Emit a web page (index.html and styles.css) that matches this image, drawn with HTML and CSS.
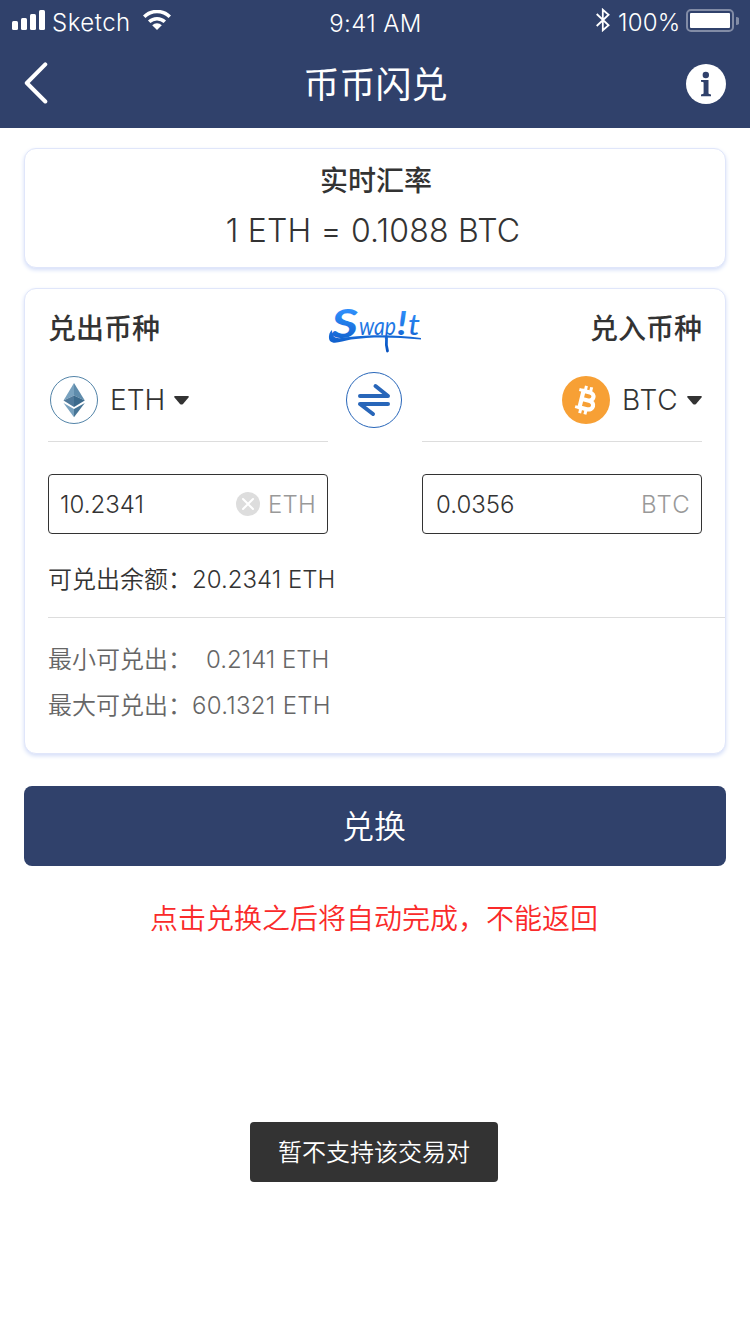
FILE: index.html
```html
<!DOCTYPE html>
<html lang="zh-CN">
<head>
<meta charset="utf-8">
<title>币币闪兑</title>
<link rel="stylesheet" href="styles.css">
</head>
<body>
<div class="screen">
  <header class="header">
    <div class="status">
      <div class="status-left">
        <svg class="signal" width="33" height="20" viewBox="0 0 33 20" fill="#fff"><rect x="0" y="11" width="6" height="9" rx="1.5"/><rect x="9" y="8" width="6" height="12" rx="1.5"/><rect x="18" y="4" width="6" height="16" rx="1.5"/><rect x="27" y="0" width="6" height="20" rx="1.5"/></svg>
        <span class="carrier">Sketch</span>
        <svg class="wifi" width="28" height="20" viewBox="0 0 28 20" fill="none" stroke="#fff" stroke-width="3.5"><path d="M1.2 6.7A18.3 18.3 0 0 1 26.8 6.7"/><path d="M6.2 11.8A11.2 11.2 0 0 1 21.8 11.8"/><path fill="#fff" stroke="none" d="M9.2 15.2A6.9 6.9 0 0 1 18.8 15.2L14 20Z"/></svg>
      </div>
      <span class="clock">9:41 AM</span>
      <div class="status-right">
        <svg class="bluetooth" width="14" height="24" viewBox="0 0 14 24" fill="none" stroke="#fff" stroke-width="1.8"><path d="M.7 6 12.6 17.3 6.8 22.3V1.7L12.6 6.7.7 18"/></svg>
        <span class="percent">100%</span>
        <svg class="battery" width="53" height="23" viewBox="0 0 53 23"><rect x="1" y="1" width="46" height="21" rx="4" fill="none" stroke="#828ca6" stroke-width="2"/><rect x="4" y="4" width="40" height="15" rx="1" fill="#fff"/><path d="M50 8A4 4 0 0 1 50 16Z" fill="#828ca6"/></svg>
      </div>
    </div>
    <nav class="nav">
      <svg class="back" width="24" height="42" viewBox="0 0 24 42" fill="none" stroke="#fff" stroke-width="4" stroke-linecap="round" stroke-linejoin="round"><path d="M21.3 2.3 2.8 21 21.3 39.5"/></svg>
      <h1 class="title">币币闪兑</h1>
      <svg width="40" height="40" viewBox="0 0 40 40"><circle cx="20" cy="20" r="20" fill="#fff"/><circle cx="19.8" cy="11" r="3.2" fill="#30416b"/><path fill="#30416b" d="M15 16H22.5V29.5Q22.8 30.2 25 30.6V32.2H15V30.6Q17.3 30.2 17.6 29.5V18.6Q17.4 17.8 15 17.7Z"/></svg>
    </nav>
  </header>

  <main class="main">
    <section class="card rate">
      <h2 class="label">实时汇率</h2>
      <p class="rate-value">1 ETH = 0.1088 BTC</p>
    </section>

    <section class="card swap">
      <div class="labels">
        <h2 class="label">兑出币种</h2>
        <svg class="logo" width="94" height="50" viewBox="0 0 94 50">
          <defs><linearGradient id="ink" gradientUnits="userSpaceOnUse" x1="0" y1="0" x2="0" y2="46"><stop offset="0" stop-color="#3193ff"/><stop offset="1" stop-color="#0650bd"/></linearGradient></defs>
          <g class="logo-text" fill="url(#ink)"><text x="3" y="31" font-size="40" font-weight="700" textLength="27" lengthAdjust="spacingAndGlyphs">S</text><text x="31" y="28" font-size="25" textLength="37" lengthAdjust="spacingAndGlyphs">wap</text><text x="69" y="28" font-size="32" font-weight="700" textLength="10" lengthAdjust="spacingAndGlyphs">!</text><text x="80" y="28" font-size="28" textLength="12" lengthAdjust="spacingAndGlyphs">t</text></g>
          <path fill="url(#ink)" d="M4 23C1 25 0 31 2 34C6 38 14 34 23 32.500C44 29.500 66 30 93 32.500V31C68 27.500 44 27.500 21 30C12 31 4 34 4 23Z"/>
          <path fill="none" stroke="url(#ink)" stroke-width="2.800" stroke-linecap="round" d="M58.500 31Q57.800 38 59.500 44"/>
        </svg>
        <h2 class="label label-right">兑入币种</h2>
      </div>

      <div class="coins">
        <div class="coin">
          <svg width="48" height="48" viewBox="0 0 48 48"><circle cx="24" cy="24" r="23.5" fill="#fff" stroke="#5384a8"/><path fill="#79a2bf" d="M24 7V19.5L13.5 24.5Z"/><path fill="#5f8cac" d="M24 7V19.5L34.8 24.5Z"/><path fill="#50799a" d="M24 19.5V31L13.5 24.5Z"/><path fill="#3c6a8c" d="M24 19.5V31L34.8 24.5Z"/><path fill="#79a2bf" d="M13.5 27 24 33V41.3Z"/><path fill="#477596" d="M34.8 27 24 33V41.3Z"/></svg>
          <span class="symbol">ETH</span>
          <svg class="caret" width="15" height="9" viewBox="0 0 15 9"><path fill="#333" d="M1 0H14Q15.4.5 14.5 1.6L9 7.9Q7.500 9 6 7.900L.5 1.600Q-.4.500 1 0Z"/></svg>
        </div>
        <svg class="exchange" width="56" height="56" viewBox="0 0 56 56" fill="none" stroke="#2866b9"><circle cx="28" cy="28" r="27.500"/><path stroke-width="4" stroke-linecap="round" stroke-linejoin="round" d="M14 24H42L29.500 14M42 32H14L27 42"/></svg>
        <div class="coin coin-right">
          <svg width="48" height="48" viewBox="0 0 48 48"><circle cx="24" cy="24" r="24" fill="#f7a035"/><g transform="translate(23 24) rotate(14)" fill="none" stroke="#fff"><path stroke-width="4.200" stroke-linejoin="round" d="M-5-8.500H3C9-8.500 9-.3 3-.3H-3H4C11-.3 11 8.500 4 8.500H-5M-3.600-8V8"/><path stroke-width="3" d="M-8-8.800H-3M-8 8.800H-3M-2-14V-9M3.400-14V-9M-2 9V14M3.400 9V14"/></g></svg>
          <span class="symbol symbol-btc">BTC</span>
          <svg class="caret" width="15" height="9" viewBox="0 0 15 9"><path fill="#333" d="M1 0H14Q15.4.5 14.5 1.6L9 7.900Q7.500 9 6 7.900L.5 1.600Q-.4.500 1 0Z"/></svg>
        </div>
      </div>

      <div class="fields">
        <div class="field">
          <span class="amount">10.2341</span>
          <svg class="clear" width="24" height="24" viewBox="0 0 24 24"><circle cx="12" cy="12" r="12" fill="#ddd"/><path stroke="#fff" stroke-width="2" stroke-linecap="round" d="M7 7 17 17M17 7 7 17"/></svg>
          <span class="unit">ETH</span>
        </div>
        <div class="field field-in">
          <span class="amount">0.0356</span>
          <span class="unit unit-btc">BTC</span>
        </div>
      </div>

      <p class="row balance"><span class="row-name">可兑出余额：</span><span class="row-value">20.2341 ETH</span></p>
      <div class="limits">
        <p class="row"><span class="row-name">最小可兑出：</span><span class="row-value row-min">0.2141 ETH</span></p>
        <p class="row"><span class="row-name">最大可兑出：</span><span class="row-value row-max">60.1321 ETH</span></p>
      </div>
    </section>

    <button class="submit">兑换</button>
    <p class="warning">点击兑换之后将自动完成，不能返回</p>
    <div class="toast">暂不支持该交易对</div>
  </main>
</div>
</body>
</html>
```

FILE: styles.css
```css
* { box-sizing: border-box; margin: 0; padding: 0; }
body { background: #fff; color: #333; font-family: Inter, "Noto Sans CJK SC", sans-serif; }
svg { display: block; flex: none; }
.screen { width: 750px; height: 1334px; overflow: hidden; background: #fff; }

.header { height: 128px; background: #30416b; color: #fff; }
.status { height: 40px; padding: 0 11px 0 12px; display: grid; grid-template-columns: 1fr auto 1fr; font-size: 24px; font-weight: 350; line-height: 30px; white-space: nowrap; }
.status-left, .status-right { display: flex; align-items: flex-start; }
.status-right { justify-content: flex-end; }
.signal { margin-top: 10px; }
.carrier { margin: 8px 0 0 7px; width: 78px; letter-spacing: 0.5px; }
.wifi { margin: 10px 0 0 13px; }
.clock { margin-top: 9px; letter-spacing: 0.4px; }
.bluetooth { margin: 8px 8px 0 0; }
.percent { margin-top: 8px; width: 62px; letter-spacing: 0.2px; }
.battery { margin: 9px 0 0 6px; }
.nav { height: 88px; padding: 0 24px; display: flex; align-items: center; justify-content: space-between; }
.back { margin-bottom: 2px; }
.title { font-size: 36px; font-weight: 400; line-height: 50px; margin: 2px 0 0 17px; }

.main { padding: 20px 24px 0; display: flex; flex-direction: column; }
.card { border: 1px solid #e0e6fa; border-radius: 12px; background: #fff; box-shadow: 0 2px 4px #d4def8; }
.label { font-size: 28px; font-weight: 500; line-height: 40px; white-space: nowrap; }
.rate { height: 120px; padding: 12px 0 0 2px; text-align: center; }
.rate-value { font-size: 32px; font-weight: 350; line-height: 44px; margin: 8px 6px 0 0; letter-spacing: 0.2px; }

.swap { height: 466px; margin-top: 20px; padding: 20px 0 0 23px; }
.labels { height: 48px; padding-right: 23px; display: grid; grid-template-columns: 280px 94px 280px; align-items: start; }
.label-right { text-align: right; }
.logo { margin-top: -2px; overflow: visible; }
.logo-text { font-family: Lato, sans-serif; font-style: italic; }
.coins { height: 85px; padding-right: 23px; display: grid; grid-template-columns: 280px 94px 280px; }
.coin { height: 85px; padding: 19px 0 0 2px; display: flex; border-bottom: 1px solid #ddd; }
.coin-right { justify-content: flex-end; }
.symbol { font-size: 28px; font-weight: 350; line-height: 49px; margin-left: 12px; width: 55px; }
.symbol-btc { width: 56px; letter-spacing: 0.8px; }
.caret { margin: 20px 0 0 9px; }
.exchange { margin: 15px 0 0 18px; }
.fields { margin-top: 32px; padding-right: 23px; display: flex; justify-content: space-between; }
.field { width: 280px; height: 60px; border: 1px solid #333; border-radius: 4px; padding: 0 11px; display: flex; align-items: center; font-size: 24px; }
.field-in { padding-left: 13px; }
.amount { flex: 1; font-weight: 350; }
.clear { margin-right: 8px; }
.unit { width: 48px; color: #999; font-weight: 300; letter-spacing: 0.2px; }
.unit-btc { letter-spacing: 1.2px; width: 49px; }
.row { display: flex; font-size: 24px; font-weight: 350; line-height: 34px; white-space: nowrap; }
.row-name { width: 144px; }
.row-max { letter-spacing: 0.3px; }
.balance { height: 83px; padding-top: 29px; }
.limits { border-top: 1px solid #ddd; padding-top: 25px; color: #666; }
.limits .row { height: 46px; }
.row-min { margin-left: 14px; }

.submit { height: 80px; margin-top: 32px; padding: 2px 2px 0 0; border: 0; border-radius: 8px; background: #30416b; color: #fff; font: 350 32px/78px Inter, "Noto Sans CJK SC", sans-serif; }
.warning { margin: 33px 2px 0 0; color: #fa2a2a; font-size: 28px; font-weight: 350; line-height: 40px; text-align: center; }
.toast { align-self: center; width: 248px; height: 60px; margin: 183px 2px 0 0; border-radius: 4px; background: #333; color: #fff; font-size: 24px; font-weight: 350; line-height: 61px; text-align: center; }
```
